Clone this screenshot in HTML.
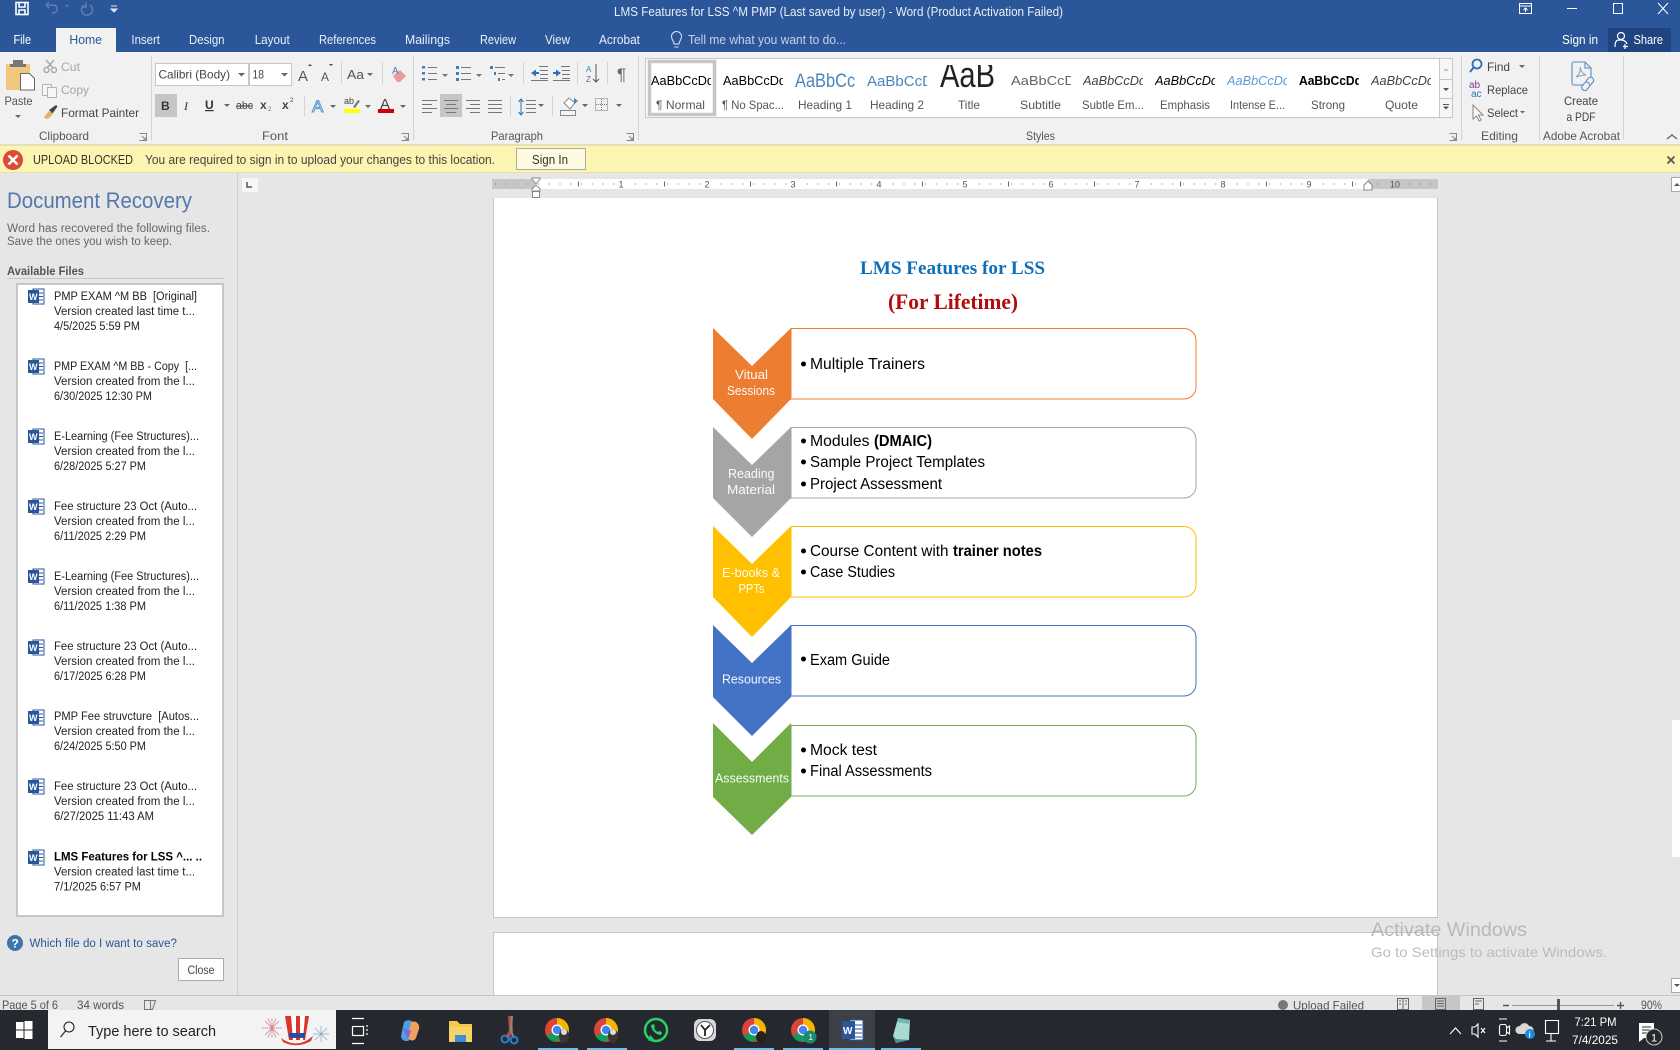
<!DOCTYPE html>
<html lang="en"><head><meta charset="utf-8"><title>LMS Features for LSS ^M PMP - Word</title>
<style>
html,body{margin:0;padding:0;background:#e6e6e6;overflow:hidden}
svg{display:block}
text{font-family:"Liberation Sans",sans-serif;font-size:12px;fill:#444;white-space:pre}
.w{fill:#fff;font-size:13px}
.tb{fill:#e8eef7;font-size:13px}
.g{fill:#a6a6a6}
.lb{fill:#555;font-size:12px}
.f{fill:#222;font-size:11.5px}
.d{fill:#000;font-size:15.5px}
.c{fill:#fff;font-size:12.5px;fill-opacity:.95}
.sb{fill:#555;font-size:12px}
.tk{fill:#fff;font-size:12px}
.rn{fill:#555;font-size:9px}
.st{fill:#555;font-size:12px}
.ic{fill:none;stroke:#666;stroke-width:1.2}
.ar{fill:#666}
</style></head><body>
<svg xmlns="http://www.w3.org/2000/svg" width="1680" height="1050" viewBox="0 0 1680 1050">
<rect width="1680" height="1050" fill="#e6e6e6"/>
<!-- title bar -->
<rect width="1680" height="52" fill="#2b579a"/>
<rect x="56" y="28" width="60" height="24" fill="#f1f1f1"/>
<rect x="1608" y="28" width="63" height="24" fill="#1f4480"/>
<g fill="none" stroke="#fff" stroke-width="1.6"><rect x="16" y="2.5" width="12" height="12"/><path d="M19 3v4h6V3M19 14v-4h6v4"/></g>
<g fill="none" stroke="#5d7fb5" stroke-width="1.5"><path d="M46 5h8a4 4 0 1 1-2 8M46 5l3-3M46 5l3 3"/><path d="M90 5a5.5 5.5 0 1 1-6 0M86 2v5h-3"/></g>
<path d="M65 5l2 2 2-2z" fill="#5d7fb5"/>
<path d="M111 6h6M111 9h6l-3 3z" stroke="#dfe7f2" stroke-width="1" fill="#dfe7f2"/>
<text class="tb" x="614" y="16" textLength="449" lengthAdjust="spacingAndGlyphs">LMS Features for LSS ^M PMP (Last saved by user) - Word (Product Activation Failed)</text>
<g fill="none" stroke="#fff" stroke-width="1"><rect x="1519.5" y="3.5" width="12" height="10"/><path d="M1519.5 6h12M1525.5 12V8M1523.5 10l2-2 2 2"/><path d="M1567 8.5h10"/><rect x="1613.5" y="3.5" width="9" height="10"/><path d="M1658 3l10 11M1668 3l-10 11"/></g>
<text class="w" x="13.5" y="44" textLength="17.5" lengthAdjust="spacingAndGlyphs">File</text>
<text x="69.4" y="44" style="font-size:13px;fill:#2b579a" textLength="32.6" lengthAdjust="spacingAndGlyphs">Home</text>
<text class="tb" x="131.4" y="44" textLength="28.6" lengthAdjust="spacingAndGlyphs">Insert</text>
<text class="tb" x="189" y="44" textLength="35.5" lengthAdjust="spacingAndGlyphs">Design</text>
<text class="tb" x="254.7" y="44" textLength="35" lengthAdjust="spacingAndGlyphs">Layout</text>
<text class="tb" x="319" y="44" textLength="57" lengthAdjust="spacingAndGlyphs">References</text>
<text class="tb" x="405" y="44" textLength="45" lengthAdjust="spacingAndGlyphs">Mailings</text>
<text class="tb" x="480" y="44" textLength="36" lengthAdjust="spacingAndGlyphs">Review</text>
<text class="tb" x="545" y="44" textLength="25" lengthAdjust="spacingAndGlyphs">View</text>
<text class="tb" x="599" y="44" textLength="41" lengthAdjust="spacingAndGlyphs">Acrobat</text>
<path d="M674 44c0-3-2.500-4-2.500-7.500a5 5 0 0 1 10 0c0 3.500-2.500 4.500-2.500 7.500zM674.500 47h4" fill="none" stroke="#dfe7f2" stroke-width="1"/>
<text x="688" y="44" style="font-size:13px;fill:#c5d3e8" textLength="158" lengthAdjust="spacingAndGlyphs">Tell me what you want to do...</text>
<text class="w" x="1562" y="44" textLength="36" lengthAdjust="spacingAndGlyphs">Sign in</text>
<g fill="none" stroke="#fff" stroke-width="1.2"><circle cx="1621" cy="36" r="3.500"/><path d="M1615 47c0-8 3-7 6-7s5 1 6 4M1625 44v5M1623 46.500h5"/></g>
<text class="w" x="1633.5" y="44" textLength="29.5" lengthAdjust="spacingAndGlyphs">Share</text>
<!-- ribbon -->
<rect y="52" width="1680" height="92" fill="#f1f1f1"/>
<g stroke="#d4d4d4" stroke-width="1"><path d="M151.5 56v84M413.5 56v84M638.5 56v84M1461.5 56v84M1539.5 56v84M1623.5 56v84"/><path d="M304.5 96v20M341.5 62v22M382.5 62v22M523.5 62v22M577.5 62v22M607.5 62v22M510.5 96v20M552.5 96v20"/></g>
<!-- clipboard -->
<rect x="6" y="64" width="24" height="26" rx="1" fill="#edc87e"/><rect x="13" y="60" width="10" height="6" fill="#777"/><rect x="10" y="64" width="16" height="3" fill="#777"/>
<path d="M20.5 73.5h9l5 5v11.500h-14z" fill="#fff" stroke="#666"/>
<text class="lb" x="4.500" y="105" textLength="28" lengthAdjust="spacingAndGlyphs">Paste</text><path d="M15 115h6l-3 3z" class="ar"/>
<g fill="none" stroke="#a8a8a8" stroke-width="1.400"><circle cx="46.500" cy="70" r="2.500"/><circle cx="54" cy="70" r="2.500"/><path d="M47 68l7-8M53 68l-7-8"/></g>
<text class="g" x="61" y="71" textLength="19" lengthAdjust="spacingAndGlyphs">Cut</text>
<g fill="#f5f5f5" stroke="#b4b4b4"><rect x="42.500" y="84.500" width="9" height="11"/><rect x="47.500" y="87.500" width="9" height="10"/></g>
<text class="g" x="61" y="94" textLength="28" lengthAdjust="spacingAndGlyphs">Copy</text>
<path d="M44 117l5-6 4 3-4 4q-3 2-5-1z" fill="#e5b25d"/><path d="M49 110l7-5 1.500 1.500-5 7z" fill="#444"/>
<text style="font-size:12px;fill:#444" x="61" y="117" textLength="78" lengthAdjust="spacingAndGlyphs">Format Painter</text>
<text class="lb" x="39" y="140" textLength="50" lengthAdjust="spacingAndGlyphs">Clipboard</text>
<g fill="none" stroke="#888" stroke-width="1"><path d="M139.500 133.500h7v7h-7M142 136l4 4m0-3v3h-3"/><path d="M401.500 133.500h7v7h-7M404 136l4 4m0-3v3h-3"/><path d="M626.500 133.500h7v7h-7M629 136l4 4m0-3v3h-3"/><path d="M1449.500 133.500h7v7h-7M1452 136l4 4m0-3v3h-3"/></g>
<!-- font -->
<rect x="155.500" y="63.500" width="93" height="22" fill="#fff" stroke="#c6c6c6"/><rect x="249.500" y="63.500" width="42" height="22" fill="#fff" stroke="#c6c6c6"/>
<text x="158.500" y="78.500" style="font-size:12px;fill:#444" textLength="71.500" lengthAdjust="spacingAndGlyphs">Calibri (Body)</text><path d="M238 73h7l-3.500 3.500z" class="ar"/>
<text x="252.500" y="78.500" style="font-size:12px;fill:#444" textLength="11.500" lengthAdjust="spacingAndGlyphs">18</text><path d="M281 73h7l-3.500 3.500z" class="ar"/>
<text x="298" y="81" style="font-size:15px;fill:#555">A</text><path d="M308 66l2-2 2 2z" fill="#444"/>
<text x="321" y="81" style="font-size:12px;fill:#555">A</text><path d="M329 64l2 2 2-2z" fill="#444"/>
<text x="347" y="79" style="font-size:13px;fill:#555" textLength="17" lengthAdjust="spacingAndGlyphs">Aa</text><path d="M367 73h6l-3 3z" class="ar"/>
<path d="M393 76l7-6 6 6-6 6h-3z" fill="#e99a9a"/><text x="392" y="74" style="font-size:10px;fill:#5878a8">A</text>
<rect x="155" y="94" width="22" height="23" fill="#c6c6c6"/>
<text x="161" y="110" style="font-size:12px;font-weight:bold;fill:#333">B</text>
<text x="184" y="110" style="font-size:12px;font-style:italic;fill:#333;font-family:'Liberation Serif',serif">I</text>
<text x="205" y="109" style="font-size:12px;text-decoration:underline;fill:#333;font-weight:bold">U</text><path d="M224 104h6l-3 3z" class="ar"/>
<text x="236" y="109" style="font-size:11px;fill:#444;text-decoration:line-through" textLength="17" lengthAdjust="spacingAndGlyphs">abc</text>
<text x="260" y="109" style="font-size:12px;fill:#444;font-weight:bold">x</text><text x="268" y="111" style="font-size:6px;fill:#3f7fb8">2</text>
<text x="282" y="109" style="font-size:12px;fill:#444;font-weight:bold">x</text><text x="290" y="102" style="font-size:6px;fill:#444">2</text>
<text x="312" y="112" style="font-size:17px;fill:#dce8f6;stroke:#5b9bd5;stroke-width:1">A</text><path d="M330 105h6l-3 3z" class="ar"/>
<rect x="344" y="109" width="16" height="4" fill="#ffff00"/><text x="344" y="104" style="font-size:9px;fill:#444">ab</text><path d="M353 107l5-7 2 1-5 7z" fill="#777"/><path d="M365 105h6l-3 3z" class="ar"/>
<text x="380" y="109" style="font-size:15px;fill:#444">A</text><rect x="378" y="109" width="16" height="4" fill="#d10000"/><path d="M400 105h6l-3 3z" class="ar"/>
<text class="lb" x="262" y="140" textLength="26" lengthAdjust="spacingAndGlyphs">Font</text>
<!-- paragraph -->
<g fill="#777" stroke="none">
<g transform="translate(422,66)"><rect width="3" height="2.500" fill="#3f7fb8"/><rect y="6" width="3" height="2.500" fill="#3f7fb8"/><rect y="12" width="3" height="2.500" fill="#3f7fb8"/><rect x="6" y="1" width="9" height="1"/><rect x="6" y="7" width="9" height="1"/><rect x="6" y="13" width="9" height="1"/></g>
<path d="M442 74h6l-3 3zM476 74h6l-3 3zM508 74h6l-3 3z"/>
<g transform="translate(456,66)"><rect width="3" height="3" fill="#3f7fb8"/><rect y="6" width="3" height="3" fill="#3f7fb8"/><rect y="12" width="3" height="3" fill="#3f7fb8"/><rect x="5" y="1" width="10" height="1"/><rect x="5" y="7" width="10" height="1"/><rect x="5" y="13" width="10" height="1"/></g>
<g transform="translate(490,66)"><rect width="3" height="3" fill="#3f7fb8"/><rect x="5" y="1" width="10" height="1"/><rect x="4" y="6" width="2" height="3" fill="#3f7fb8"/><rect x="8" y="7" width="7" height="1"/><rect x="8" y="12" width="2" height="3"/><rect x="12" y="13" width="3" height="1"/></g>
<g transform="translate(531,66)"><path d="M0 7l5-3.500v2.500h3v2h-3v2.500z" fill="#2b72b8"/><rect x="8" y="0" width="9" height="1"/><rect x="9" y="4" width="8" height="1"/><rect x="9" y="8" width="8" height="1"/><rect x="9" y="12" width="8" height="1"/><rect x="0" y="14" width="17" height="1"/></g>
<g transform="translate(553,66)"><path d="M8 7l-5-3.500v2.500h-3v2h3v2.500z" fill="#2b72b8"/><rect x="8" y="0" width="9" height="1"/><rect x="9" y="4" width="8" height="1"/><rect x="9" y="8" width="8" height="1"/><rect x="9" y="12" width="8" height="1"/><rect x="0" y="14" width="17" height="1"/></g>
</g>
<text x="586" y="72" style="font-size:8px;fill:#3f7fb8">A</text><text x="586" y="82" style="font-size:8px;fill:#7d5ba6">Z</text><path d="M596 64v18M593 79l3 3 3-3" fill="none" stroke="#555"/>
<text x="617" y="80" style="font-size:17px;fill:#666">¶</text>
<rect x="440" y="94" width="22" height="23" fill="#c6c6c6"/>
<g stroke="#777" fill="none" stroke-width="1"><path d="M422 100.500h15M422 104.500h10M422 108.500h15M422 112.500h10"/><path d="M444 100.500h14M446 104.500h10M444 108.500h14M446 112.500h10"/><path d="M466 100.500h14M470 104.500h10M466 108.500h14M470 112.500h10"/><path d="M488 100.500h14M488 104.500h14M488 108.500h14M488 112.500h14"/><path d="M526 100.500h10M526 104.500h10M526 108.500h10M526 112.500h10"/></g>
<path d="M521 99v16M518.500 102l2.500-3 2.500 3M518.500 112l2.500 3 2.500-3" fill="none" stroke="#2b72b8"/>
<path d="M538 104h6l-3 3zM582 104h6l-3 3zM616 104h6l-3 3z" class="ar"/>
<path d="M564 103l5-5 6 5-5 6z" fill="#fff" stroke="#888"/><path d="M574 98l4 3-4 3z" fill="#3f7fb8"/><rect x="560.500" y="110.500" width="15" height="5" fill="#f5f5f5" stroke="#888"/>
<rect x="595.500" y="98.500" width="12" height="12" fill="none" stroke="#777" stroke-dasharray="1 1"/><path d="M601.500 99v12M596 104.500h12" stroke="#777" stroke-dasharray="1 1"/>
<text class="lb" x="491" y="140" textLength="52" lengthAdjust="spacingAndGlyphs">Paragraph</text>
<!-- styles gallery -->
<rect x="645.500" y="58.500" width="807" height="59" fill="#fff" stroke="#c6c6c6"/>
<rect x="649.500" y="61.500" width="65" height="53" fill="#fff" stroke="#c6c6c6" stroke-width="3.500"/>
<rect x="1439.500" y="58.500" width="13" height="59" fill="#f7f7f7" stroke="#c6c6c6"/><path d="M1440 79.500h12M1440 98.500h12" stroke="#c6c6c6"/><path d="M1443 71l3-3 3 3z" fill="#c4c4c4"/><path d="M1443 88h6l-3 3zM1443 106.500h6l-3 3z" fill="#555" stroke="none"/><rect x="1443" y="104" width="6" height="1" fill="#555"/>
<svg x="651" y="62" width="60" height="36"><text x="0" y="23" style="font-size:12.500px;fill:#000" textLength="63" lengthAdjust="spacingAndGlyphs">AaBbCcDd</text></svg>
<svg x="723" y="62" width="60" height="36"><text x="0" y="23" style="font-size:12.500px;fill:#000" textLength="63" lengthAdjust="spacingAndGlyphs">AaBbCcDd</text></svg>
<svg x="795" y="62" width="60" height="36"><text x="0" y="25" style="font-size:19px;fill:#4b84ba" textLength="72" lengthAdjust="spacingAndGlyphs">AaBbCcD</text></svg>
<svg x="867" y="62" width="60" height="36"><text x="0" y="24" style="font-size:15px;fill:#4b84ba" textLength="66" lengthAdjust="spacingAndGlyphs">AaBbCcD</text></svg>
<svg x="935" y="65" width="65" height="33"><text x="5" y="22" style="font-size:36px;fill:#222" textLength="55" lengthAdjust="spacingAndGlyphs">AaB</text></svg>
<svg x="1011" y="62" width="60" height="36"><text x="0" y="23" style="font-size:12.500px;fill:#666" textLength="64" lengthAdjust="spacingAndGlyphs">AaBbCcD</text></svg>
<svg x="1083" y="62" width="60" height="36"><text x="0" y="23" style="font-size:12.500px;font-style:italic;fill:#404040" textLength="63" lengthAdjust="spacingAndGlyphs">AaBbCcDd</text></svg>
<svg x="1155" y="62" width="60" height="36"><text x="0" y="23" style="font-size:12.500px;font-style:italic;fill:#000" textLength="63" lengthAdjust="spacingAndGlyphs">AaBbCcDd</text></svg>
<svg x="1227" y="62" width="60" height="36"><text x="0" y="23" style="font-size:12.500px;font-style:italic;fill:#5b9bd5" textLength="63" lengthAdjust="spacingAndGlyphs">AaBbCcDd</text></svg>
<svg x="1299" y="62" width="60" height="36"><text x="0" y="23" style="font-size:12.500px;font-weight:bold;fill:#000" textLength="63" lengthAdjust="spacingAndGlyphs">AaBbCcDd</text></svg>
<svg x="1371" y="62" width="60" height="36"><text x="0" y="23" style="font-size:12.500px;font-style:italic;fill:#404040" textLength="63" lengthAdjust="spacingAndGlyphs">AaBbCcDd</text></svg>
<text class="lb" x="656" y="109" textLength="49" lengthAdjust="spacingAndGlyphs">¶ Normal</text>
<text class="lb" x="722" y="109" textLength="62" lengthAdjust="spacingAndGlyphs">¶ No Spac...</text>
<text class="lb" x="798" y="109" textLength="54" lengthAdjust="spacingAndGlyphs">Heading 1</text>
<text class="lb" x="870" y="109" textLength="54" lengthAdjust="spacingAndGlyphs">Heading 2</text>
<text class="lb" x="958" y="109" textLength="22" lengthAdjust="spacingAndGlyphs">Title</text>
<text class="lb" x="1020" y="109" textLength="41" lengthAdjust="spacingAndGlyphs">Subtitle</text>
<text class="lb" x="1082" y="109" textLength="62" lengthAdjust="spacingAndGlyphs">Subtle Em...</text>
<text class="lb" x="1160" y="109" textLength="50" lengthAdjust="spacingAndGlyphs">Emphasis</text>
<text class="lb" x="1230" y="109" textLength="55" lengthAdjust="spacingAndGlyphs">Intense E...</text>
<text class="lb" x="1311" y="109" textLength="34" lengthAdjust="spacingAndGlyphs">Strong</text>
<text class="lb" x="1385" y="109" textLength="33" lengthAdjust="spacingAndGlyphs">Quote</text>
<text class="lb" x="1026" y="140" textLength="29" lengthAdjust="spacingAndGlyphs">Styles</text>
<!-- editing -->
<circle cx="1477" cy="64" r="4.500" fill="none" stroke="#2b72b8" stroke-width="1.800"/><path d="M1474 67l-4 5" stroke="#2b72b8" stroke-width="2"/>
<text x="1487" y="71" style="font-size:12px;fill:#444" textLength="23" lengthAdjust="spacingAndGlyphs">Find</text><path d="M1519 65h6l-3 3z" class="ar"/>
<text x="1469" y="88" style="font-size:10px;fill:#7d3c98">ab</text><text x="1471" y="97" style="font-size:10px;fill:#2b72b8">ac</text>
<text x="1487" y="94" style="font-size:12px;fill:#444" textLength="41" lengthAdjust="spacingAndGlyphs">Replace</text>
<path d="M1473 105v14l3.500-3 2.500 5 2-1-2.500-5h4.500z" fill="#f8f8f8" stroke="#888"/>
<text x="1487" y="117" style="font-size:12px;fill:#444" textLength="31" lengthAdjust="spacingAndGlyphs">Select</text><path d="M1520 111h5l-2.500 2.500z" class="ar"/>
<text class="lb" x="1481" y="140" textLength="37" lengthAdjust="spacingAndGlyphs">Editing</text>
<path d="M1574 62h11l6 6v15a2 2 0 0 1-2 2h-15a2 2 0 0 1-2-2V64a2 2 0 0 1 2-2z M1585 62v6h6" fill="none" stroke="#5b8cc4" stroke-width="1.100"/><path d="M1576 77c3-2 5-6 4-10 1 4 3 7 6 8-4 0-7 1-10 2z" fill="none" stroke="#8aa0c0"/>
<rect x="1587" y="77" width="6" height="9" rx="3" transform="rotate(40 1590 81)" fill="#f1f1f1" stroke="#5b8cc4" stroke-width="1.100"/><rect x="1583" y="82" width="6" height="9" rx="3" transform="rotate(40 1586 86)" fill="#f1f1f1" stroke="#5b8cc4" stroke-width="1.100"/>
<text x="1564" y="105" style="font-size:12px;fill:#444" textLength="34" lengthAdjust="spacingAndGlyphs">Create</text>
<text x="1566.500" y="121" style="font-size:12px;fill:#444" textLength="29" lengthAdjust="spacingAndGlyphs">a PDF</text>
<text class="lb" x="1543" y="140" textLength="77" lengthAdjust="spacingAndGlyphs">Adobe Acrobat</text>
<path d="M1667 139l5-4 5 4" fill="none" stroke="#666" stroke-width="1.400"/>
<!-- message bar -->
<rect y="144" width="1680" height="29" fill="#fcf5b1"/><rect y="144" width="1680" height="2" fill="#e4dfb6"/><rect y="172" width="1680" height="1" fill="#e4dfb6"/>
<circle cx="13" cy="160" r="10" fill="#dc4a38"/><path d="M8.500 155.500l9 9M17.500 155.500l-9 9" stroke="#fff" stroke-width="2.600"/>
<text x="33" y="164" style="font-size:12.500px;fill:#333" textLength="100" lengthAdjust="spacingAndGlyphs">UPLOAD BLOCKED</text>
<text x="145" y="164" style="font-size:12.500px;fill:#444" textLength="350" lengthAdjust="spacingAndGlyphs">You are required to sign in to upload your changes to this location.</text>
<rect x="516.500" y="148.500" width="69" height="21" fill="#fdfae0" stroke="#ababab"/>
<text x="532" y="164" style="font-size:12.500px;fill:#333" textLength="36" lengthAdjust="spacingAndGlyphs">Sign In</text>
<path d="M1667.500 156.500l7 7M1674.500 156.500l-7 7" stroke="#555" stroke-width="1.700"/>
<!-- recovery pane -->
<path d="M237.500 173v822" stroke="#cfcfcf"/>
<text x="7" y="208" style="font-size:22px;fill:#5577aa" textLength="185" lengthAdjust="spacingAndGlyphs">Document Recovery</text>
<text x="7" y="232" style="font-size:11.500px;fill:#666" textLength="203" lengthAdjust="spacingAndGlyphs">Word has recovered the following files.</text>
<text x="7" y="245" style="font-size:11.500px;fill:#666" textLength="165" lengthAdjust="spacingAndGlyphs">Save the ones you wish to keep.</text>
<text x="7" y="275" style="font-size:11.500px;font-weight:bold;fill:#555" textLength="77" lengthAdjust="spacingAndGlyphs">Available Files</text>
<path d="M7 278.500h217" stroke="#c6c6c6"/>
<rect x="17" y="284" width="206" height="632" fill="#fff" stroke="#aaa" stroke-width="1.200"/>
<g>
<rect x="33" y="289" width="11" height="15" fill="#fff" stroke="#2b579a"/><rect x="28" y="290" width="11" height="13" fill="#2b579a"/><path d="M39 293h4M39 296.500h4M39 300h4" stroke="#2b579a"/>
<rect x="33" y="359" width="11" height="15" fill="#fff" stroke="#2b579a"/><rect x="28" y="360" width="11" height="13" fill="#2b579a"/><path d="M39 363h4M39 366.500h4M39 370h4" stroke="#2b579a"/>
<rect x="33" y="429" width="11" height="15" fill="#fff" stroke="#2b579a"/><rect x="28" y="430" width="11" height="13" fill="#2b579a"/><path d="M39 433h4M39 436.500h4M39 440h4" stroke="#2b579a"/>
<rect x="33" y="499" width="11" height="15" fill="#fff" stroke="#2b579a"/><rect x="28" y="500" width="11" height="13" fill="#2b579a"/><path d="M39 503h4M39 506.500h4M39 510h4" stroke="#2b579a"/>
<rect x="33" y="569" width="11" height="15" fill="#fff" stroke="#2b579a"/><rect x="28" y="570" width="11" height="13" fill="#2b579a"/><path d="M39 573h4M39 576.500h4M39 580h4" stroke="#2b579a"/>
<rect x="33" y="640" width="11" height="15" fill="#fff" stroke="#2b579a"/><rect x="28" y="641" width="11" height="13" fill="#2b579a"/><path d="M39 644h4M39 647.500h4M39 651h4" stroke="#2b579a"/>
<rect x="33" y="710" width="11" height="15" fill="#fff" stroke="#2b579a"/><rect x="28" y="711" width="11" height="13" fill="#2b579a"/><path d="M39 714h4M39 717.500h4M39 721h4" stroke="#2b579a"/>
<rect x="33" y="779" width="11" height="15" fill="#fff" stroke="#2b579a"/><rect x="28" y="780" width="11" height="13" fill="#2b579a"/><path d="M39 783h4M39 786.500h4M39 790h4" stroke="#2b579a"/>
<rect x="33" y="850" width="11" height="15" fill="#fff" stroke="#2b579a"/><rect x="28" y="851" width="11" height="13" fill="#2b579a"/><path d="M39 854h4M39 857.500h4M39 861h4" stroke="#2b579a"/>
</g>
<g>
<text x="29" y="300" style="font-size:9px;fill:#fff;font-weight:bold">W</text><text x="29" y="370" style="font-size:9px;fill:#fff;font-weight:bold">W</text><text x="29" y="440" style="font-size:9px;fill:#fff;font-weight:bold">W</text><text x="29" y="510" style="font-size:9px;fill:#fff;font-weight:bold">W</text><text x="29" y="580" style="font-size:9px;fill:#fff;font-weight:bold">W</text><text x="29" y="651" style="font-size:9px;fill:#fff;font-weight:bold">W</text><text x="29" y="721" style="font-size:9px;fill:#fff;font-weight:bold">W</text><text x="29" y="790" style="font-size:9px;fill:#fff;font-weight:bold">W</text><text x="29" y="861" style="font-size:9px;fill:#fff;font-weight:bold">W</text>
</g>
<text class="f" x="54" y="300" textLength="143" lengthAdjust="spacingAndGlyphs">PMP EXAM ^M BB  [Original]</text>
<text class="f" x="54" y="315" textLength="141" lengthAdjust="spacingAndGlyphs">Version created last time t...</text>
<text class="f" x="54" y="330" textLength="86" lengthAdjust="spacingAndGlyphs">4/5/2025 5:59 PM</text>
<text class="f" x="54" y="370" textLength="143" lengthAdjust="spacingAndGlyphs">PMP EXAM ^M BB - Copy  [...</text>
<text class="f" x="54" y="385" textLength="141" lengthAdjust="spacingAndGlyphs">Version created from the l...</text>
<text class="f" x="54" y="400" textLength="98" lengthAdjust="spacingAndGlyphs">6/30/2025 12:30 PM</text>
<text class="f" x="54" y="440" textLength="145" lengthAdjust="spacingAndGlyphs">E-Learning (Fee Structures)...</text>
<text class="f" x="54" y="455" textLength="141" lengthAdjust="spacingAndGlyphs">Version created from the l...</text>
<text class="f" x="54" y="470" textLength="92" lengthAdjust="spacingAndGlyphs">6/28/2025 5:27 PM</text>
<text class="f" x="54" y="510" textLength="143" lengthAdjust="spacingAndGlyphs">Fee structure 23 Oct (Auto...</text>
<text class="f" x="54" y="525" textLength="141" lengthAdjust="spacingAndGlyphs">Version created from the l...</text>
<text class="f" x="54" y="540" textLength="92" lengthAdjust="spacingAndGlyphs">6/11/2025 2:29 PM</text>
<text class="f" x="54" y="580" textLength="145" lengthAdjust="spacingAndGlyphs">E-Learning (Fee Structures)...</text>
<text class="f" x="54" y="595" textLength="141" lengthAdjust="spacingAndGlyphs">Version created from the l...</text>
<text class="f" x="54" y="610" textLength="92" lengthAdjust="spacingAndGlyphs">6/11/2025 1:38 PM</text>
<text class="f" x="54" y="650" textLength="143" lengthAdjust="spacingAndGlyphs">Fee structure 23 Oct (Auto...</text>
<text class="f" x="54" y="665" textLength="141" lengthAdjust="spacingAndGlyphs">Version created from the l...</text>
<text class="f" x="54" y="680" textLength="92" lengthAdjust="spacingAndGlyphs">6/17/2025 6:28 PM</text>
<text class="f" x="54" y="720" textLength="145" lengthAdjust="spacingAndGlyphs">PMP Fee struvcture  [Autos...</text>
<text class="f" x="54" y="735" textLength="141" lengthAdjust="spacingAndGlyphs">Version created from the l...</text>
<text class="f" x="54" y="750" textLength="92" lengthAdjust="spacingAndGlyphs">6/24/2025 5:50 PM</text>
<text class="f" x="54" y="790" textLength="143" lengthAdjust="spacingAndGlyphs">Fee structure 23 Oct (Auto...</text>
<text class="f" x="54" y="805" textLength="141" lengthAdjust="spacingAndGlyphs">Version created from the l...</text>
<text class="f" x="54" y="820" textLength="100" lengthAdjust="spacingAndGlyphs">6/27/2025 11:43 AM</text>
<text class="f" x="54" y="860.500" style="font-weight:bold;fill:#000" textLength="148" lengthAdjust="spacingAndGlyphs">LMS Features for LSS ^... ..</text>
<text class="f" x="54" y="875.500" textLength="141" lengthAdjust="spacingAndGlyphs">Version created last time t...</text>
<text class="f" x="54" y="890.500" textLength="87" lengthAdjust="spacingAndGlyphs">7/1/2025 6:57 PM</text>
<circle cx="15" cy="943" r="8" fill="#3f74ae"/><text x="11.500" y="947.500" style="font-size:12px;font-weight:bold;fill:#fff">?</text>
<text x="29.500" y="947" style="font-size:11.500px;fill:#2b579a" textLength="147.500" lengthAdjust="spacingAndGlyphs">Which file do I want to save?</text>
<rect x="178.500" y="958.500" width="45" height="22" fill="#fff" stroke="#ababab"/>
<text x="187.500" y="974" style="font-size:11.500px;fill:#444" textLength="27" lengthAdjust="spacingAndGlyphs">Close</text>
<!-- ruler -->
<rect x="242" y="178" width="16" height="14" fill="#f7f7f7"/><path d="M247 182v5h5" fill="none" stroke="#555" stroke-width="1.500"/>
<rect x="492" y="179" width="946" height="10" fill="#fff"/><rect x="492" y="179" width="43" height="10" fill="#c6c6c6"/><rect x="1368" y="179" width="70" height="10" fill="#c6c6c6"/>
<path d="M492 184H1438" stroke="#777" stroke-width="1" stroke-dasharray="1 9.750" stroke-dashoffset="-3"/>
<path d="M664 184H1360" stroke="#666" stroke-width="5" stroke-dasharray="1 85"/>
<rect x="578" y="181.500" width="1" height="5" fill="#666"/>
<g><rect x="615" y="180" width="12" height="8" fill="#fff"/><rect x="701" y="180" width="12" height="8" fill="#fff"/><rect x="787" y="180" width="12" height="8" fill="#fff"/><rect x="873" y="180" width="12" height="8" fill="#fff"/><rect x="959" y="180" width="12" height="8" fill="#fff"/><rect x="1045" y="180" width="12" height="8" fill="#fff"/><rect x="1131" y="180" width="12" height="8" fill="#fff"/><rect x="1217" y="180" width="12" height="8" fill="#fff"/><rect x="1303" y="180" width="12" height="8" fill="#fff"/><rect x="1387" y="180" width="16" height="8" fill="#c6c6c6"/>
<text class="rn" x="618.500" y="187.500">1</text><text class="rn" x="704.500" y="187.500">2</text><text class="rn" x="790.500" y="187.500">3</text><text class="rn" x="876.500" y="187.500">4</text><text class="rn" x="962.500" y="187.500">5</text><text class="rn" x="1048.500" y="187.500">6</text><text class="rn" x="1134.500" y="187.500">7</text><text class="rn" x="1220.500" y="187.500">8</text><text class="rn" x="1306.500" y="187.500">9</text><text class="rn" x="1390" y="187.500">10</text></g>
<path d="M532 178h8v1l-4 5-4-5zM536 185l4 4v2h-8v-2zM532.500 191.500h7v6h-7z" fill="#fff" stroke="#888"/>
<path d="M1364 190v-5l4-4 4 4v5z" fill="#fff" stroke="#888"/>
<!-- pages -->
<rect x="493.500" y="198" width="944" height="719" fill="#fff"/>
<path d="M493.500 198v719.500h944V198" fill="none" stroke="#c6c6c6"/>
<rect x="493.500" y="932.500" width="944" height="70" fill="#fff" stroke="#c6c6c6"/>
<text x="860" y="274" style="font-family:'Liberation Serif',serif;font-size:19px;font-weight:bold;fill:#0e6fba" textLength="185" lengthAdjust="spacingAndGlyphs">LMS Features for LSS</text>
<text x="888" y="309" style="font-family:'Liberation Serif',serif;font-size:22px;font-weight:bold;fill:#b20c0c" textLength="130" lengthAdjust="spacingAndGlyphs">(For Lifetime)</text>
<!-- boxes -->
<g fill="#fff" stroke-width="1">
<path d="M791 328.500H1184a12 12 0 0 1 12 12V387a12 12 0 0 1-12 12H791z" stroke="#ed7d31"/>
<path d="M791 427.500H1184a12 12 0 0 1 12 12V486a12 12 0 0 1-12 12H791z" stroke="#a5a5a5"/>
<path d="M791 526.500H1184a12 12 0 0 1 12 12V585a12 12 0 0 1-12 12H791z" stroke="#ffc000"/>
<path d="M791 625.500H1184a12 12 0 0 1 12 12V684a12 12 0 0 1-12 12H791z" stroke="#4472c4"/>
<path d="M791 725.500H1184a12 12 0 0 1 12 12V784a12 12 0 0 1-12 12H791z" stroke="#70ad47"/>
</g>
<path d="M713 328l39 38 39-38v71l-39 40-39-40z" fill="#ed7d31"/>
<path d="M713 427l39 38 39-38v71l-39 39-39-39z" fill="#a5a5a5"/>
<path d="M713 526l39 38 39-38v71l-39 40-39-40z" fill="#ffc000"/>
<path d="M713 625l39 38 39-38v72l-39 39-39-39z" fill="#4472c4"/>
<path d="M713 723l39 39 39-39v74l-39 38-39-38z" fill="#70ad47"/>
<text class="c" x="735" y="379" textLength="33" lengthAdjust="spacingAndGlyphs">Vitual</text>
<text class="c" x="727" y="395" textLength="48" lengthAdjust="spacingAndGlyphs">Sessions</text>
<text class="c" x="728" y="478" textLength="46.500" lengthAdjust="spacingAndGlyphs">Reading</text>
<text class="c" x="727" y="494" textLength="48" lengthAdjust="spacingAndGlyphs">Material</text>
<text class="c" x="722" y="577" textLength="58" lengthAdjust="spacingAndGlyphs">E-books &amp;</text>
<text class="c" x="738.500" y="593" textLength="26" lengthAdjust="spacingAndGlyphs">PPTs</text>
<text class="c" x="722" y="683.500" textLength="59" lengthAdjust="spacingAndGlyphs">Resources</text>
<text class="c" x="715" y="782.500" textLength="74" lengthAdjust="spacingAndGlyphs">Assessments</text>
<g fill="#000"><circle cx="803.500" cy="364" r="2.500"/><circle cx="803.500" cy="441" r="2.500"/><circle cx="803.500" cy="462" r="2.500"/><circle cx="803.500" cy="484" r="2.500"/><circle cx="803.500" cy="551" r="2.500"/><circle cx="803.500" cy="572" r="2.500"/><circle cx="803.500" cy="659" r="2.500"/><circle cx="803.500" cy="750" r="2.500"/><circle cx="803.500" cy="771" r="2.500"/></g>
<text class="d" x="810" y="369" textLength="115" lengthAdjust="spacingAndGlyphs">Multiple Trainers</text>
<text class="d" x="810" y="446" textLength="59.500" lengthAdjust="spacingAndGlyphs">Modules</text>
<text class="d" x="874" y="446" style="font-weight:bold" textLength="58" lengthAdjust="spacingAndGlyphs">(DMAIC)</text>
<text class="d" x="810" y="467" textLength="175" lengthAdjust="spacingAndGlyphs">Sample Project Templates</text>
<text class="d" x="810" y="489" textLength="132" lengthAdjust="spacingAndGlyphs">Project Assessment</text>
<text class="d" x="810" y="556" textLength="138.500" lengthAdjust="spacingAndGlyphs">Course Content with</text>
<text class="d" x="953" y="556" style="font-weight:bold" textLength="89" lengthAdjust="spacingAndGlyphs">trainer notes</text>
<text class="d" x="810" y="577" textLength="85" lengthAdjust="spacingAndGlyphs">Case Studies</text>
<text class="d" x="810" y="665" textLength="80" lengthAdjust="spacingAndGlyphs">Exam Guide</text>
<text class="d" x="810" y="755" textLength="67" lengthAdjust="spacingAndGlyphs">Mock test</text>
<text class="d" x="810" y="776" textLength="122" lengthAdjust="spacingAndGlyphs">Final Assessments</text>
<!-- scrollbar -->
<rect x="1672" y="177" width="8" height="818" fill="#e6e6e6"/>
<rect x="1672" y="720" width="8" height="137" fill="#fdfdfd"/>
<rect x="1671.500" y="177.500" width="9" height="14" fill="#fff" stroke="#aaa"/><path d="M1674 186l3-3 3 3z" fill="#555"/>
<rect x="1671.500" y="978.500" width="9" height="14" fill="#fff" stroke="#aaa"/><path d="M1674 984l3 3 3-3z" fill="#555"/>
<!-- activate -->
<text x="1371" y="936" style="font-size:19px;fill:#b8b8b8" textLength="156" lengthAdjust="spacingAndGlyphs">Activate Windows</text>
<text x="1371" y="957" style="font-size:14px;fill:#bcbcbc" textLength="236" lengthAdjust="spacingAndGlyphs">Go to Settings to activate Windows.</text>
<!-- status -->
<rect y="995" width="1680" height="15" fill="#e6e6e6"/><path d="M0 995.500H1680" stroke="#c6c6c6"/>
<rect x="1422" y="996" width="38" height="14" fill="#c6c6c6"/>
<text class="st" x="2" y="1009" textLength="56" lengthAdjust="spacingAndGlyphs">Page 5 of 6</text>
<text class="st" x="77" y="1009" textLength="47" lengthAdjust="spacingAndGlyphs">34 words</text>
<path d="M144.500 1000.500h6v9h-6zM150.500 1000.500l5 0-3 9h-2z" fill="none" stroke="#777"/>
<circle cx="1283" cy="1005" r="5" fill="#777"/><text class="st" x="1293" y="1009.500" textLength="71" lengthAdjust="spacingAndGlyphs">Upload Failed</text>
<g fill="none" stroke="#666"><rect x="1397.500" y="998.500" width="11" height="11"/><path d="M1403 999v10M1399 1001h2M1399 1004h2M1405 1001h2M1405 1004h2"/><rect x="1435.500" y="998.500" width="10" height="11"/><path d="M1437 1001h7M1437 1003.500h7M1437 1006h7"/><rect x="1473.500" y="998.500" width="10" height="11"/><path d="M1475 1001h7M1475 1004h4"/></g>
<path d="M1503 1005.500h6M1617 1005.500h7M1620.500 1002v7" stroke="#555" stroke-width="1.400"/>
<path d="M1512 1005.500h102" stroke="#999"/><rect x="1557" y="999" width="3" height="11" fill="#555"/>
<text class="st" x="1641" y="1009" textLength="21" lengthAdjust="spacingAndGlyphs">90%</text>
<!-- taskbar -->
<rect y="1010" width="1680" height="40" fill="#25282e"/>
<rect x="48" y="1010" width="288" height="39" fill="#f3f3f3"/>
<g fill="#fff"><rect x="16" y="1022" width="7.500" height="7.500"/><rect x="24.500" y="1021" width="8" height="8.500"/><rect x="16" y="1030.500" width="7.500" height="7.500"/><rect x="24.500" y="1030.500" width="8" height="8.500"/></g>
<circle cx="69" cy="1027" r="5" fill="none" stroke="#222" stroke-width="1.100"/><path d="M65.500 1031l-5 6" stroke="#222" stroke-width="1.100"/>
<text x="88" y="1036" style="font-size:15px;fill:#222" textLength="128" lengthAdjust="spacingAndGlyphs">Type here to search</text>
<g stroke="#d08090" stroke-width=".7"><path d="M262 1028h20M272 1018v20M265 1021l14 14M279 1021l-14 14M268 1018.500l8 19M276 1018.500l-8 19"/></g><g stroke="#8aa3cc" stroke-width=".7"><path d="M313 1034h16M321 1026v16M315 1028l12 12M327 1028l-12 12"/></g>
<path d="M285 1016h24l-4 24h-16z" fill="#d9352b"/><path d="M291 1016l2 24h3v-24zM300 1016v24h3l2-24z" fill="#fff"/><path d="M281 1038q16 12 32-2l-2 5q-14 8-28 1z" fill="#d9352b"/><rect x="289" y="1033" width="16" height="5" fill="#2a4d9e"/>
<g fill="none" stroke="#fff" stroke-width="1.200"><path d="M352 1018.500h12M352 1043.500h12"/><rect x="352.500" y="1026.500" width="11" height="9"/><path d="M367 1025v2M367 1029v2M367 1033v2"/></g>
<path d="M404 1022c5-4 9-1 9 3l-3 14c-2 4-9 2-9-3z" fill="#4aa0e6"/><path d="M411 1022c6-2 9 3 8 7l-3 9c-2 4-7 3-8-1z" fill="#f2a05c"/><path d="M403 1028l8 3-3 8z" fill="#8a63d2"/>
<path d="M449 1021h8l3 3h12v18h-23z" fill="#f7c948"/><rect x="449" y="1027" width="23" height="15" fill="#f6d365"/><rect x="455" y="1035" width="11" height="7" fill="#3d8ed8"/>
<path d="M510 1016l1 15-4 7" stroke="#b84a3a" stroke-width="4" fill="none"/><path d="M512 1016l-1 15 3 7" stroke="#888" stroke-width="2" fill="none"/><circle cx="505" cy="1039" r="3.500" fill="none" stroke="#2d7fd3" stroke-width="2"/><circle cx="514" cy="1040" r="3.500" fill="none" stroke="#2d7fd3" stroke-width="2"/>
<g><circle cx="557" cy="1030" r="12" fill="#db4437"/><path d="M557 1030l-10.400 6A12 12 0 0 0 557 1042l6-12z" fill="#0f9d58"/><path d="M557 1018a12 12 0 0 1 12 12 12 12 0 0 1-6 10.400l-6-10.400z" fill="#f4b400"/><circle cx="557" cy="1030" r="5.500" fill="#fff"/><circle cx="557" cy="1030" r="4.200" fill="#4285f4"/><ellipse cx="564" cy="1036" rx="5" ry="7" fill="#3a3633"/><circle cx="564" cy="1032" r="3" fill="#ddd"/></g>
<g><circle cx="606" cy="1030" r="12" fill="#db4437"/><path d="M606 1030l-10.400 6A12 12 0 0 0 606 1042l6-12z" fill="#0f9d58"/><path d="M606 1018a12 12 0 0 1 12 12 12 12 0 0 1-6 10.400l-6-10.400z" fill="#f4b400"/><circle cx="606" cy="1030" r="5.500" fill="#fff"/><circle cx="606" cy="1030" r="4.200" fill="#4285f4"/><ellipse cx="613" cy="1036" rx="5" ry="7" fill="#3a3633"/><circle cx="613" cy="1032" r="3" fill="#ddd"/></g>
<circle cx="656" cy="1030" r="11" fill="none" stroke="#25d366" stroke-width="2.500"/><path d="M648 1041l2-6 4 4z" fill="#25d366"/><path d="M651 1025c0 5 5 10 10 10l1-3-3-1-1 1c-2-1-3-2-4-4l1-1-1-3z" fill="#25d366"/>
<rect x="694" y="1019" width="22" height="22" rx="6" fill="#d8d8d8"/><circle cx="705" cy="1030" r="8.500" fill="#fff" stroke="#555"/><path d="M705 1030l-4-5M705 1030l5-5M705 1030v6" stroke="#222" stroke-width="1.800"/>
<g><circle cx="754" cy="1030" r="12" fill="#db4437"/><path d="M754 1030l-10.400 6A12 12 0 0 0 754 1042l6-12z" fill="#0f9d58"/><path d="M754 1018a12 12 0 0 1 12 12 12 12 0 0 1-6 10.400l-6-10.400z" fill="#f4b400"/><circle cx="754" cy="1030" r="5.500" fill="#fff"/><circle cx="754" cy="1030" r="4.200" fill="#4285f4"/><ellipse cx="761" cy="1037" rx="5" ry="6" fill="#222"/></g>
<g><circle cx="803" cy="1030" r="12" fill="#db4437"/><path d="M803 1030l-10.400 6A12 12 0 0 0 803 1042l6-12z" fill="#0f9d58"/><path d="M803 1018a12 12 0 0 1 12 12 12 12 0 0 1-6 10.400l-6-10.400z" fill="#f4b400"/><circle cx="803" cy="1030" r="5.500" fill="#fff"/><circle cx="803" cy="1030" r="4.200" fill="#4285f4"/><circle cx="810" cy="1037" r="6.500" fill="#1a8a6e"/></g>
<text x="808.500" y="1040" style="font-size:8px;fill:#fff">1</text>
<rect x="829" y="1010" width="46" height="40" fill="#3d4046"/>
<rect x="850" y="1020" width="13" height="20" fill="#fff" stroke="#2b579a"/><path d="M854 1025h8M854 1029h8M854 1033h8M854 1037h8" stroke="#2b579a"/><rect x="842" y="1021" width="13" height="18" fill="#2b579a"/><text x="843" y="1034" style="font-size:10px;font-weight:bold;fill:#fff">W</text>
<path d="M893 1036l5-18 12 2-1 20-13 3z" fill="#a8dcd0"/><path d="M893 1036l3 7 13-3-13-1z" fill="#4e8f91"/><path d="M898 1018l12 2-1 4-12-2z" fill="#6fb8b5"/>
<g fill="#76b9ed"><rect x="538" y="1048" width="40" height="2"/><rect x="587" y="1048" width="40" height="2"/><rect x="734" y="1048" width="40" height="2"/><rect x="783" y="1048" width="40" height="2"/><rect x="829" y="1048" width="46" height="2"/><rect x="881" y="1048" width="40" height="2"/></g>
<g fill="none" stroke="#fff" stroke-width="1.100"><path d="M1450 1034l5.500-6 5.500 6"/><path d="M1472 1027h3l3-3v13l-3-3h-3z"/><path d="M1481 1028l4 5M1485 1028l-4 5"/><rect x="1499.500" y="1024.500" width="7" height="11" rx="2"/><path d="M1506.500 1028l3-2v8l-3-2M1499 1019h8M1499 1041h8"/><rect x="1545.500" y="1020.500" width="13" height="13"/><path d="M1551 1034v7M1546 1041h10"/></g>
<path d="M1519 1034a4 4 0 0 1 1-8 5 5 0 0 1 9 0 3.500 3.500 0 0 1 1 8z" fill="#d8d8d8"/><circle cx="1530" cy="1034" r="5" fill="#1b87d9"/><text x="1528.500" y="1037.500" style="font-size:8px;fill:#fff;font-weight:bold">i</text>
<text class="tk" x="1574.500" y="1026" textLength="42" lengthAdjust="spacingAndGlyphs">7:21 PM</text>
<text class="tk" x="1572" y="1044" textLength="46" lengthAdjust="spacingAndGlyphs">7/4/2025</text>
<path d="M1639 1023h15v15h-10l-5 4z" fill="#fff"/><path d="M1642 1027h9M1642 1030h9M1642 1033h9" stroke="#25282e"/>
<circle cx="1654" cy="1037" r="8" fill="#25282e" stroke="#ccc"/><text x="1651" y="1041.500" style="font-size:11px;fill:#fff">1</text>
</svg>
</body></html>
